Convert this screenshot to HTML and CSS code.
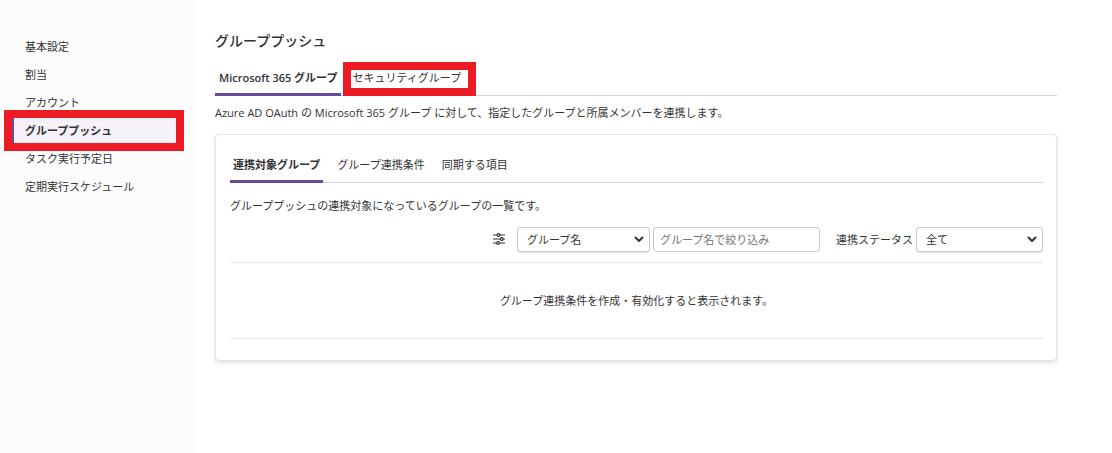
FILE: index.html
```html
<!DOCTYPE html>
<html lang="ja">
<head>
  <meta charset="UTF-8" />
  <meta name="viewport" content="width=device-width, initial-scale=1.0"/>
  <title>グループプッシュ</title>
  <link rel="stylesheet" href="styles.css">
</head>
<body>

  <nav class="sidebar">
    <a href="#">基本設定</a>
    <a href="#">割当</a>
    <a href="#">アカウント</a>
    <a href="#" class="active marked">グループプッシュ</a>
    <a href="#">タスク実行予定日</a>
    <a href="#">定期実行スケジュール</a>
  </nav>

  <main class="content">
    <h1>グループプッシュ</h1>

    <div class="tabs page-tabs">
      <button class="tab active">Microsoft 365 グループ</button>
      <button class="tab marked">セキュリティグループ</button>
    </div>
    <p class="lead">Azure AD OAuth の Microsoft 365 グループ に対して、指定したグループと所属メンバーを連携します。</p>

    <section class="card">
      <div class="tabs card-tabs">
        <button class="tab active">連携対象グループ</button>
        <button class="tab">グループ連携条件</button>
        <button class="tab">同期する項目</button>
      </div>
      <p class="description">グループプッシュの連携対象になっているグループの一覧です。</p>

      <form class="filters">
        <svg class="filter-icon" viewBox="0 0 12 12" aria-hidden="true">
          <path d="M0 2h4M7 2h5M0 6h7.3M10.3 6H12M0 10h3.5M6.5 10H12"/>
          <circle cx="5.5" cy="2" r="1.4"/>
          <circle cx="8.8" cy="6" r="1.4"/>
          <circle cx="5" cy="10" r="1.4"/>
        </svg>
        <div class="select-box field">
          <select aria-label="絞り込み項目">
            <option>グループ名</option>
          </select>
          <svg class="chevron" viewBox="0 0 10 6" aria-hidden="true"><path d="M1 1l4 4 4-4"/></svg>
        </div>
        <input class="keyword" type="text" placeholder="グループ名で絞り込み" aria-label="グループ名で絞り込み">
        <label for="status">連携ステータス</label>
        <div class="select-box status">
          <select id="status">
            <option>全て</option>
          </select>
          <svg class="chevron" viewBox="0 0 10 6" aria-hidden="true"><path d="M1 1l4 4 4-4"/></svg>
        </div>
      </form>

      <div class="empty">グループ連携条件を作成・有効化すると表示されます。</div>
    </section>
  </main>

</body>
</html>
```
FILE: styles.css
```css
* {
  box-sizing: border-box;
}

body {
  margin: 0;
  display: flex;
  min-height: 100vh;
  background: #fff;
  color: #333;
  font-family: "Open Sans", "Noto Sans CJK JP", sans-serif;
  font-size: 11px;
  line-height: 16px;
}

button,
input,
select {
  font: inherit;
  color: inherit;
}

.sidebar {
  flex: none;
  width: 195px;
  padding: 34px 19px 34px 12px;
  background: #fcfcfc;
}

.sidebar a {
  display: block;
  position: relative;
  height: 26px;
  margin-bottom: 2px;
  padding-left: 11px;
  border-left: 2px solid transparent;
  color: #333;
  line-height: 26px;
  text-decoration: none;
}

.sidebar a.active {
  border-left-color: #6b4a9c;
  background: #f5f2f9;
  font-weight: 600;
}

/* red frame around the items to look at */
.marked::after {
  content: "";
  position: absolute;
  border: 8px solid #ed1c24;
  pointer-events: none;
}

.sidebar .marked::after {
  inset: -8px -8px -7px -10px;
}

.content {
  flex: 1;
  min-width: 0;
  padding: 32px 55px 32px 20px;
}

h1 {
  margin: 0 0 20px;
  font-size: 14px;
  font-weight: 500;
  line-height: 18px;
}

.tabs {
  display: flex;
  border-bottom: 1px solid #d4d4d4;
}

.tab {
  position: relative;
  margin-bottom: -1px;
  border: none;
  border-bottom: 3px solid transparent;
  background: none;
  white-space: nowrap;
  cursor: pointer;
}

.tab.active {
  border-bottom-color: #6b4a9c;
  font-weight: 600;
}

.page-tabs {
  gap: 7px;
}

.page-tabs .tab {
  padding: 0 4px 7px;
}

.page-tabs .marked::after {
  inset: -8px -11px -3px -5px;
}

.lead {
  margin: 9px 0 13px;
}

.card {
  padding: 22px 13px 21px 14px;
  border: 1px solid #e4e4e4;
  border-radius: 4px;
  box-shadow: 0 2px 4px rgba(0, 0, 0, 0.12);
}

.card-tabs {
  gap: 11px;
}

.card-tabs .tab {
  padding: 0 3px 7px;
}

.description {
  margin: 15px 0 13px;
}

.filters {
  display: flex;
  align-items: center;
  justify-content: flex-end;
  padding-bottom: 10px;
  border-bottom: 1px solid #e8e8e8;
}

.filter-icon {
  width: 12px;
  height: 12px;
  margin: 0 12px 2px 0;
  fill: none;
  stroke: #333;
  stroke-width: 1.2;
}

.select-box {
  position: relative;
}

.field {
  width: 133px;
  margin-right: 3px;
}

.status {
  width: 127px;
}

.filters select,
.filters input {
  display: block;
  width: 100%;
  height: 25px;
  border: 1px solid #c8c8c8;
  border-radius: 3px;
  background: #fff;
}

.filters select {
  appearance: none;
  padding: 0 24px 0 9px;
  box-shadow: 0 1px 1px rgba(0, 0, 0, 0.1);
}

.filters .keyword {
  width: 167px;
  margin-right: 16px;
  padding: 0 6px;
}

.keyword::placeholder {
  color: #757575;
}

.filters label {
  margin-right: 3px;
}

.chevron {
  position: absolute;
  top: 9px;
  right: 6px;
  width: 10px;
  height: 6px;
  fill: none;
  stroke: #333;
  stroke-width: 2;
  pointer-events: none;
}

.empty {
  padding: 30px 0 29px;
  border-bottom: 1px solid #e8e8e8;
  text-align: center;
}
```
